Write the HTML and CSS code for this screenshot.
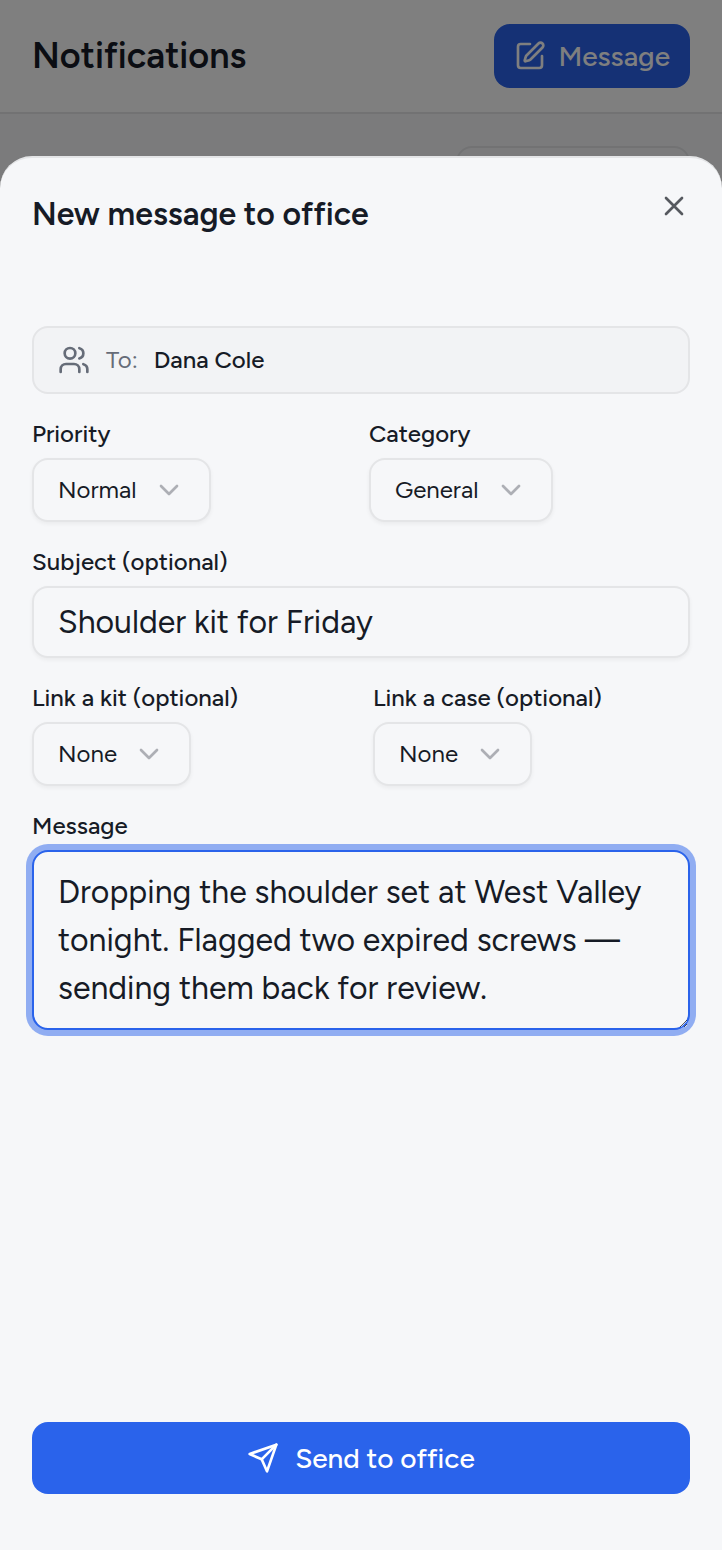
FILE: index.html
```html
<!DOCTYPE html>
<html lang="en">
<head>
  <meta charset="UTF-8">
  <meta name="viewport" content="width=device-width, initial-scale=1.0">
  <title>Notifications</title>
  <link rel="stylesheet" href="styles.css">
</head>
<body>
  <header class="topbar">
    <h1>Notifications</h1>
    <button type="button" class="btn btn-message">
      <svg class="icon" viewBox="0 0 24 24" aria-hidden="true">
        <path d="M12 3H5a2 2 0 0 0-2 2v14a2 2 0 0 0 2 2h14a2 2 0 0 0 2-2v-7"/>
        <path d="M18.375 2.625a1 1 0 0 1 3 3l-9.013 9.014a2 2 0 0 1-.853.505l-2.873.84a.5.5 0 0 1-.62-.62l.84-2.873a2 2 0 0 1 .506-.852z"/>
      </svg>
      Message
    </button>
  </header>
  <main class="page">
    <div class="filter"></div>
  </main>

  <div class="overlay">
    <section class="sheet" role="dialog" aria-labelledby="sheet-title">
      <div class="sheet-header">
        <h2 id="sheet-title">New message to office</h2>
        <button type="button" class="close" aria-label="Close">
          <svg class="icon" viewBox="0 0 24 24" aria-hidden="true"><path d="M18 6 6 18M6 6l12 12"/></svg>
        </button>
      </div>

      <form class="message-form">
        <div class="recipient">
          <svg class="icon" viewBox="0 0 24 24" aria-hidden="true">
            <path d="M16 21v-2a4 4 0 0 0-4-4H6a4 4 0 0 0-4 4v2"/>
            <circle cx="9" cy="7" r="4"/>
            <path d="M22 21v-2a4 4 0 0 0-3-3.87"/>
            <path d="M16 3.13a4 4 0 0 1 0 7.75"/>
          </svg>
          <span class="to">To:</span>
          <span class="name">Dana Cole</span>
        </div>

        <div class="row">
          <div class="field">
            <label for="priority">Priority</label>
            <select id="priority" name="priority">
              <option>Normal</option>
            </select>
          </div>
          <div class="field">
            <label for="category">Category</label>
            <select id="category" name="category">
              <option>General</option>
            </select>
          </div>
        </div>

        <div class="field">
          <label for="subject">Subject (optional)</label>
          <input type="text" id="subject" name="subject" value="Shoulder kit for Friday">
        </div>

        <div class="row row-links">
          <div class="field">
            <label for="kit">Link a kit (optional)</label>
            <select id="kit" name="kit">
              <option>None</option>
            </select>
          </div>
          <div class="field">
            <label for="case">Link a case (optional)</label>
            <select id="case" name="case">
              <option>None</option>
            </select>
          </div>
        </div>

        <div class="field">
          <label for="message">Message</label>
          <textarea id="message" name="message" rows="3">Dropping the shoulder set at West Valley tonight. Flagged two expired screws — sending them back for review.</textarea>
        </div>

        <button type="submit" class="btn btn-send">
          <svg class="icon" viewBox="0 0 24 24" aria-hidden="true">
            <path d="m22 2-7 20-4-9-9-4Z"/>
            <path d="M22 2 11 13"/>
          </svg>
          Send to office
        </button>
      </form>
    </section>
  </div>
</body>
</html>
```
FILE: styles.css
```css
* {
  box-sizing: border-box;
}

body {
  margin: 0;
  font-family: Figtree, Lato, sans-serif;
  font-size: 24px;
  line-height: 32px;
  color: #161b26;
  background: #f6f7f9;
}

h1, h2 {
  margin: 0;
  font-weight: 600;
}

h1 {
  font-size: 36px;
  line-height: 48px;
}

h2 {
  font-size: 32px;
  line-height: 48px;
}

button, input, select, textarea {
  font-family: inherit;
  color: inherit;
}

.icon {
  width: 32px;
  height: 32px;
  flex: none;
  fill: none;
  stroke: currentColor;
  stroke-width: 2;
  stroke-linecap: round;
  stroke-linejoin: round;
}

.topbar {
  display: flex;
  align-items: center;
  justify-content: space-between;
  padding: 24px 32px;
  background: #fff;
  border-bottom: 2px solid #e4e5e7;
}

.btn {
  display: flex;
  align-items: center;
  justify-content: center;
  border: none;
  border-radius: 16px;
  background: #2a63eb;
  color: #fff;
  font-size: 28px;
  font-weight: 500;
  line-height: 40px;
  cursor: pointer;
}

.btn-message {
  gap: 12px;
  padding: 12px 20px;
}

.page {
  display: flex;
  justify-content: flex-end;
  padding: 32px;
}

.filter {
  width: 234px;
  height: 64px;
  border: 2px solid #e4e5e7;
  border-radius: 16px;
}

.overlay {
  position: fixed;
  inset: 0;
  display: flex;
  padding-top: 156px;
  background: rgba(0, 0, 0, 0.5);
}

.sheet {
  flex: 1;
  display: flex;
  flex-direction: column;
  min-width: 0;
  padding: 32px 32px 56px;
  border-top: 2px solid #e4e5e7;
  border-radius: 32px 32px 0 0;
  background: #f6f7f9;
}

.sheet-header {
  display: flex;
  align-items: flex-start;
  justify-content: space-between;
  margin-bottom: 88px;
}

.close {
  display: flex;
  padding: 0;
  border: none;
  background: none;
  color: #56595f;
  cursor: pointer;
}

.message-form {
  flex: 1;
  display: flex;
  flex-direction: column;
  gap: 24px;
}

.recipient {
  display: flex;
  align-items: center;
  gap: 16px;
  padding: 16px 24px;
  border: 2px solid #e4e5e7;
  border-radius: 16px;
  background: #f2f3f5;
}

.recipient .icon, .to {
  color: #666c78;
}

.name {
  font-weight: 500;
}

.row {
  display: grid;
  grid-template-columns: 1fr 1fr;
  gap: 16px;
}

.row-links {
  gap: 24px;
}

.field {
  display: flex;
  flex-direction: column;
  align-items: flex-start;
  gap: 8px;
}

label {
  font-weight: 500;
}

input, select, textarea {
  border: 2px solid #e4e5e7;
  border-radius: 16px;
  background-color: #f6f7f9;
  box-shadow: 0 2px 4px rgba(0, 0, 0, 0.05);
}

select {
  appearance: none;
  padding: 14px 72px 14px 24px;
  font-size: 24px;
  line-height: 32px;
  background-image: url("data:image/svg+xml,%3Csvg xmlns='http://www.w3.org/2000/svg' viewBox='0 0 24 24' fill='none' stroke='%23adafb5' stroke-width='2' stroke-linecap='round' stroke-linejoin='round'%3E%3Cpath d='m6 9 6 6 6-6'/%3E%3C/svg%3E");
  background-repeat: no-repeat;
  background-position: right 24px center;
  background-size: 32px;
}

input {
  width: 100%;
  padding: 10px 24px;
  font-size: 32px;
  line-height: 48px;
  height: 72px;
}

textarea {
  display: block;
  width: 100%;
  padding: 16px 24px;
  font-size: 32px;
  line-height: 48px;
  outline: none;
  overflow: hidden;
  border-color: #2a63eb;
  box-shadow: 0 0 0 6px rgba(42, 99, 235, 0.5);
}

.btn-send {
  gap: 16px;
  margin-top: auto;
  padding: 16px 24px;
}
```
